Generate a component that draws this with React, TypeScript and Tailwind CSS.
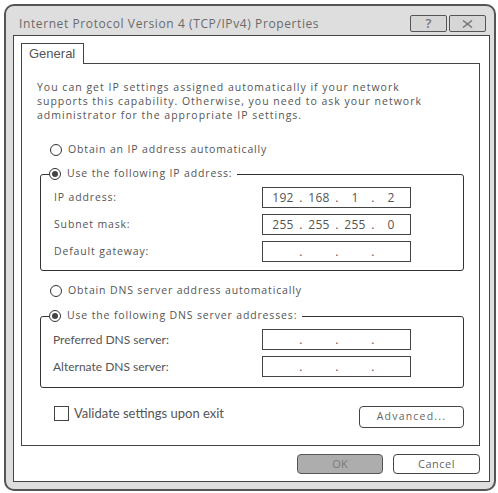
import React from 'react';

const Radio = ({ checked }: { checked?: boolean }) => (
  <span className="flex h-[12px] w-[12px] shrink-0 items-center justify-center rounded-full border-[1.5px] border-[#333] bg-white">
    {checked && <span className="h-[6px] w-[6px] rounded-full bg-[#444]" />}
  </span>
);

const IpBox = ({ octets }: { octets: string[] }) => (
  <div className="flex h-[21px] w-[149px] items-center border border-[#444] bg-white pl-[5px] font-['Open_Sans',sans-serif] text-[12px] tracking-[0.3px] text-[#555]">
    {octets.map((o, i) => (
      <React.Fragment key={i}>
        <span className="w-[30px] text-center">{o}</span>
        {i < 3 && <span className="w-[6px] text-center">.</span>}
      </React.Fragment>
    ))}
  </div>
);

const spaced = "font-['Open_Sans',sans-serif] text-[10.5px] tracking-[0.85px] text-[#555]";

export default function App() {
  return (
    <div className="h-[493px] w-[498px] bg-white pl-[4px] pt-[4px]">
      <div className="flex h-[487px] w-[492px] flex-col rounded-[10px] border-2 border-[#555] bg-[#dedede]">
        {/* Title bar */}
        <div className="flex h-[29px] justify-between pl-[13px] pr-[8px] pt-[9px]">
          <div className="flex h-[17px] items-center font-['Open_Sans',sans-serif] text-[12px] tracking-[0.6px] text-[#6a6a6a]">
            Internet Protocol Version 4 (TCP/IPv4) Properties
          </div>
          <div className="flex gap-[2px]">
            <div className="flex h-[17px] w-[37px] items-center justify-center rounded-[2px] border border-[#555] bg-[#d6d6d6] font-['Open_Sans',sans-serif] text-[13px] font-semibold text-[#777]">
              ?
            </div>
            <div className="flex h-[17px] w-[37px] items-center justify-center rounded-[2px] border border-[#555] bg-[#d6d6d6]">
              <svg width="11" height="8" viewBox="0 0 11 8">
                <path d="M1 0.5L10 7.5M10 0.5L1 7.5" stroke="#777" strokeWidth="1.5" />
              </svg>
            </div>
          </div>
        </div>

        {/* White panel */}
        <div className="ml-[7px] h-[447px] w-[477px] border border-[#444] bg-white pl-[7px] pt-[7px]">
          {/* Tab */}
          <div className="relative z-10 -mb-px flex h-[21px] w-[63px] items-center border border-b-0 border-[#444] bg-white pl-[7px] font-['Liberation_Sans',Arial,sans-serif] text-[13px] text-[#555]">
            General
          </div>

          {/* Content box */}
          <div className="flex h-[383px] w-[459px] flex-col border border-[#444]">
            <p className="ml-[15px] mt-[16px] font-['Open_Sans',sans-serif] text-[10.5px] leading-[14px] tracking-[1px] text-[#555]">
              You can get IP settings assigned automatically if your network
              <br />
              supports this capability. Otherwise, you need to ask your network
              <br />
              administrator for the appropriate IP settings.
            </p>

            <div className={`ml-[28px] mt-[21px] flex h-[14px] items-center gap-[6px] ${spaced}`}>
              <Radio />
              Obtain an IP address automatically
            </div>

            <fieldset className="ml-[18px] mt-[10px] w-[424px] rounded-[3px] border border-[#333] pb-[8px]">
              <legend className="ml-[8px] pr-[5px]">
                <span className={`flex h-[14px] items-center gap-[6px] ${spaced}`}>
                  <Radio checked />
                  Use the following IP address:
                </span>
              </legend>
              <div className="mt-[6px] flex flex-col gap-[6px] pl-[13px]">
                <div className="grid grid-cols-[208px_149px] items-center">
                  <span className={spaced}>IP address:</span>
                  <IpBox octets={['192', '168', '1', '2']} />
                </div>
                <div className="grid grid-cols-[208px_149px] items-center">
                  <span className={spaced}>Subnet mask:</span>
                  <IpBox octets={['255', '255', '255', '0']} />
                </div>
                <div className="grid grid-cols-[208px_149px] items-center">
                  <span className={spaced}>Default gateway:</span>
                  <IpBox octets={['', '', '', '']} />
                </div>
              </div>
            </fieldset>

            <div className={`ml-[28px] mt-[13px] flex h-[14px] items-center gap-[6px] ${spaced}`}>
              <Radio />
              Obtain DNS server address automatically
            </div>

            <fieldset className="ml-[18px] mt-[11px] w-[424px] rounded-[3px] border border-[#333] pb-[10px]">
              <legend className="ml-[8px] pr-[5px]">
                <span className={`flex h-[14px] items-center gap-[6px] ${spaced}`}>
                  <Radio checked />
                  Use the following DNS server addresses:
                </span>
              </legend>
              <div className="mt-[6px] flex flex-col gap-[6px] pl-[12px]">
                <div className="grid grid-cols-[209px_149px] items-center">
                  <span className="font-['Lato',sans-serif] text-[12px] text-[#555]">Preferred DNS server:</span>
                  <IpBox octets={['', '', '', '']} />
                </div>
                <div className="grid grid-cols-[209px_149px] items-center">
                  <span className="font-['Lato',sans-serif] text-[12px] text-[#555]">Alternate DNS server:</span>
                  <IpBox octets={['', '', '', '']} />
                </div>
              </div>
            </fieldset>

            <div className="ml-[32px] mt-[16px] flex w-[410px] items-start justify-between">
              <div className="flex items-center gap-[5px] font-['Lato',sans-serif] text-[13px] text-[#555]">
                <span className="h-[15px] w-[15px] border border-[#444] bg-white" />
                Validate settings upon exit
              </div>
              <div className="mt-[2px] flex h-[22px] w-[105px] items-center justify-center rounded-[4px] border border-[#444] font-['Open_Sans',sans-serif] text-[10.5px] tracking-[1.2px] text-[#666]">
                Advanced...
              </div>
            </div>
          </div>

          {/* Dialog buttons */}
          <div className="mt-[8px] flex justify-end gap-[10px] pr-[9px]">
            <div className="flex h-[20px] w-[86px] items-center justify-center rounded-[4px] border border-[#555] bg-[#adadad] font-['Open_Sans',sans-serif] text-[11px] text-[#7a7a7a]">
              OK
            </div>
            <div className="flex h-[20px] w-[87px] items-center justify-center rounded-[4px] border border-[#444] bg-white font-['Open_Sans',sans-serif] text-[11px] tracking-[0.5px] text-[#666]">
              Cancel
            </div>
          </div>
        </div>
      </div>
    </div>
  );
}
